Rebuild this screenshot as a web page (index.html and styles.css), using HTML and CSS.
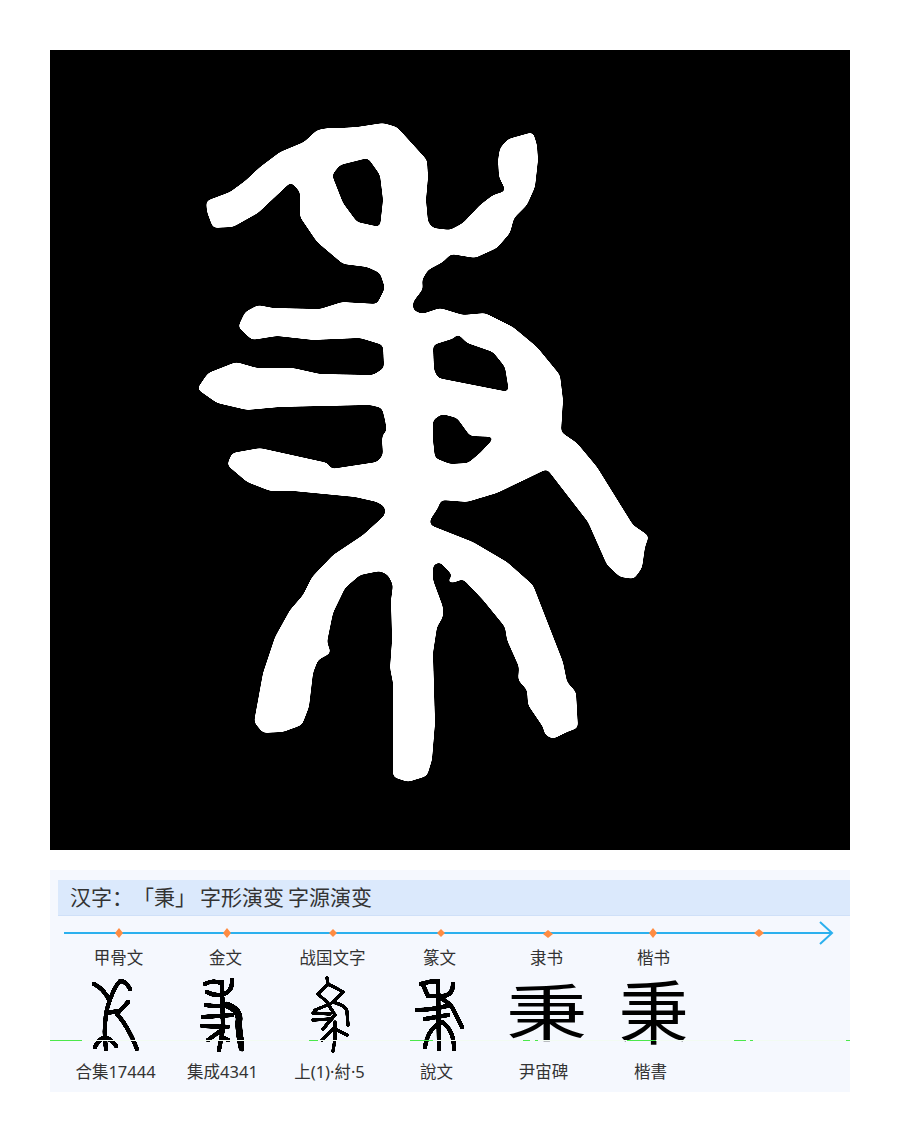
FILE: index.html
```html
<!doctype html>
<html lang="zh">
<head>
	<meta charset="UTF-8">
	<title>秉 字形演变</title>
	<link rel="stylesheet" href="styles.css">
</head>
<body>
	<!-- archaic seal form, a picture in the source: no font has it -->
	<svg class="big-form" viewBox="50 50 800 800" role="img" aria-label="秉 古文字形">
		<defs>
			<filter id="round-big" color-interpolation-filters="sRGB">
				<feGaussianBlur in="SourceAlpha" stdDeviation="2.500"/>
				<feColorMatrix type="matrix" values="0 0 0 0 1  0 0 0 0 1  0 0 0 0 1  0 0 0 14 -6.500"/>
			</filter>
			<filter id="round-small" color-interpolation-filters="sRGB" x="-10%" y="-10%" width="120%" height="120%">
				<feGaussianBlur in="SourceAlpha" stdDeviation="0.700"/>
				<feColorMatrix type="matrix" values="0 0 0 0 0  0 0 0 0 0  0 0 0 0 0  0 0 0 5 -2"/>
			</filter>
		</defs>
		<rect x="50" y="50" width="800" height="800" fill="#000"/>
		<path fill="#fff" filter="url(#round-big)" fill-rule="evenodd" d="M206 201 230 192 245 181 260 167 280 152 304 142 317 130 328 128 340 128 357 127 383 123 397 127 427 160 428 177 426 200 428 222 433 228 450 230 463 223 480 205 493 195 506 191 499 177 498 160 500 148 508 139 533 132 537 145 538 160 535 187 527 205 514 218 510 233 497 248 475 258 463 256 451 254 443 262 428 270 422 280 423 289 413 302 413 310 422 314 440 308 463 315 485 313 513 327 537 347 560 375 563 400 561 432 577 443 597 467 633 525 649 536 645 547 642 568 634 579 620 577 607 565 588 522 547 469 520 482 497 493 467 502 441 500 438 508 430 520 430 525 473 542 507 562 533 585 563 662 567 682 576 692 578 728 567 732 553 739 545 735 543 727 528 705 527 690 518 680 519 667 507 640 505 627 483 600 463 579 453 583 445 582 453 576 440 562 433 565 433 580 443 607 443 617 437 627 433 653 435 723 432 760 427 776 408 782 393 777 393 723 393 683 390 668 392 640 391 600 393 585 388 575 380 571 360 575 345 588 333 613 327 642 331 653 318 660 313 673 309 707 302 725 283 732 263 733 254 722 263 673 275 637 290 610 303 595 312 577 333 555 363 535 385 515 385 507 377 502 355 497 293 491 270 491 247 482 227 465 232 453 260 448 328 463 331 469 377 462 383 455 382 440 383 433 387 432 385 420 382 408 370 405 280 407 247 410 217 403 197 389 208 373 236 362 257 368 293 368 320 374 373 375 384 368 383 345 360 338 313 340 277 336 252 340 238 327 245 312 258 305 273 308 320 309 342 302 377 304 385 288 380 273 367 267 343 264 317 242 300 217 300 192 291 182 258 213 233 227 213 228 207 212Z
		M332 175 340 165 368 158 380 175 383 200 380 227 357 222 343 203Z
		M433 345 455 338 457 333 467 343 493 352 505 367 509 392 438 378 434 370Z
		M442 414 457 418 470 436 495 437 480 453 468 463 450 464 435 458 433 440 433 420Z"/>
	</svg>

	<section class="panel">
		<h1 class="title">汉字：「秉」 字形演变 字源演变</h1>

		<svg class="timeline" viewBox="50 917 800 30" aria-hidden="true">
			<path d="M64 932H832M820 921 832 932 820 943" fill="none" stroke="#2bb0ee" stroke-width="2"/>
			<path fill="#ff8c42" d="M119 927 123 932 119 937 115 932ZM227 927 231 932 227 937 223 932ZM333 928 337 932 333 936 329 932ZM441 928 445 932 441 936 437 932ZM548 929 553 933 548 937 543 933ZM653 927 657 932 653 937 649 932ZM759 928 764 932 759 936 754 932Z"/>
		</svg>

		<div class="row top-labels">
			<span>甲骨文</span>
			<span>金文</span>
			<span>战国文字</span>
			<span>篆文</span>
			<span>隶书</span>
			<span>楷书</span>
		</div>

		<div class="row forms">
			<svg viewBox="65 970 107 86" role="img" aria-label="甲骨文字形">
				<path class="ink" d="M94 984Q104 989 109 1000M130 989Q126 981 120 981Q113 988 107 1009Q103 1029 106 1049M107 1013 118 1011M128 1002 117 1014Q128 1026 137 1049M95 1047Q99 1039 105 1037Q111 1039 116 1046"/>
			</svg>
			<svg viewBox="172 970 107 86" role="img" aria-label="金文字形">
				<path class="ink" d="M205 984Q214 979 222 984M232 980Q233 994 218 995Q212 995 207 992M222 982 223 1029 219 1050M206 1005Q216 1007 228 1005M203 1017 232 1015M202 1026 228 1027M223 1029 208 1040M222 1037 228 1040"/>
				<path class="ink thick" d="M227 1005Q240 1010 239 1020Q238 1030 242 1048"/>
			</svg>
			<svg viewBox="279 970 107 86" role="img" aria-label="战国文字字形">
				<path class="ink thin" d="M327 978 328 984 318 994 327 1002M330 985Q342 991 343 992L333 1002Q347 1006 347 1012L348 1025M330 1004 315 1010M313 1013 330 1014M313 1020 330 1019M328 1004 335 1015 323 1029M335 1022V1039L333 1051M335 1029 347 1035M335 1027 322 1040"/>
			</svg>
			<svg viewBox="386 970 107 86" role="img" aria-label="篆文字形">
				<path class="ink" d="M421 984Q430 981 438 981M423 985 428 996 443 996Q453 995 453 984M438 982 439 1049M417 1010Q430 1010 447 1006M425 1019 448 1015M442 999Q450 1003 453 1009L462 1027M442 1022Q428 1028 425 1047M442 1022Q454 1030 454 1049"/>
			</svg>
			<span class="char lishu">秉</span>
			<span class="char kaishu">秉</span>
		</div>

		<div class="row bottom-labels">
			<span>合集17444</span>
			<span>集成4341</span>
			<span>上(1)·紂·5</span>
			<span>說文</span>
			<span>尹宙碑</span>
			<span>楷書</span>
		</div>

		<svg class="scan" viewBox="50 1040 800 1" aria-hidden="true">
			<path d="M50 1040.500H850" stroke="#f2fbf2" stroke-width="1"/>
			<path d="M50 1040.500H82M309 1040.500H318M410 1040.500H433M523 1040.500H530M535 1040.500H538M627 1040.500H656M734 1040.500H746M750 1040.500H753M846 1040.500H850" stroke="#4be84b" stroke-width="1"/>
		</svg>
	</section>
</body>
</html>
```

FILE: styles.css
```css
body {
	margin: 0;
	padding: 50px 50px 0;
	font-family: "Noto Sans", "Noto Sans CJK SC", sans-serif;
	color: #333;
}

.big-form {
	display: block;
	width: 800px;
	height: 800px;
}

.panel {
	position: relative;
	height: 222px;
	margin-top: 20px;
	padding-top: 10px;
	box-sizing: border-box;
	background: #f5f8fe;
}

.title {
	height: 35px;
	margin: 0 0 2px 8px;
	padding-left: 12px;
	background: #dbe9fc;
	border-bottom: 1px solid #cfe0f8;
	font-size: 21px;
	font-weight: normal;
	line-height: 34px;
	text-spacing-trim: space-all;
	word-spacing: -1.500px;
}

.timeline {
	display: block;
	width: 800px;
	height: 30px;
}

.row {
	display: grid;
	grid-template-columns: repeat(6, 107px);
	text-align: center;
}

.top-labels,
.bottom-labels {
	font-size: 16.500px;
	line-height: 24px;
}

.top-labels {
	margin-left: 15px;
	margin-top: -2px;
}

.forms {
	margin-left: 15px;
	height: 85px;
}

.forms svg {
	display: block;
	width: 107px;
	height: 86px;
}

.bottom-labels {
	margin-left: 12px;
	margin-top: 5px;
}

.ink {
	fill: none;
	stroke: #000;
	stroke-width: 4.500;
	stroke-linecap: round;
	stroke-linejoin: round;
	filter: url(#round-small);
}

.thick {
	stroke-width: 7;
}

.thin {
	stroke-width: 3.500;
}

.char {
	color: #000;
	font-size: 58px;
	line-height: 85px;
	transform: scale(1.2);
}

.lishu {
	transform: scale(1.4, 1.05);
}

.scan {
	position: absolute;
	left: 0;
	top: 170px;
	width: 800px;
	height: 1px;
}
```
